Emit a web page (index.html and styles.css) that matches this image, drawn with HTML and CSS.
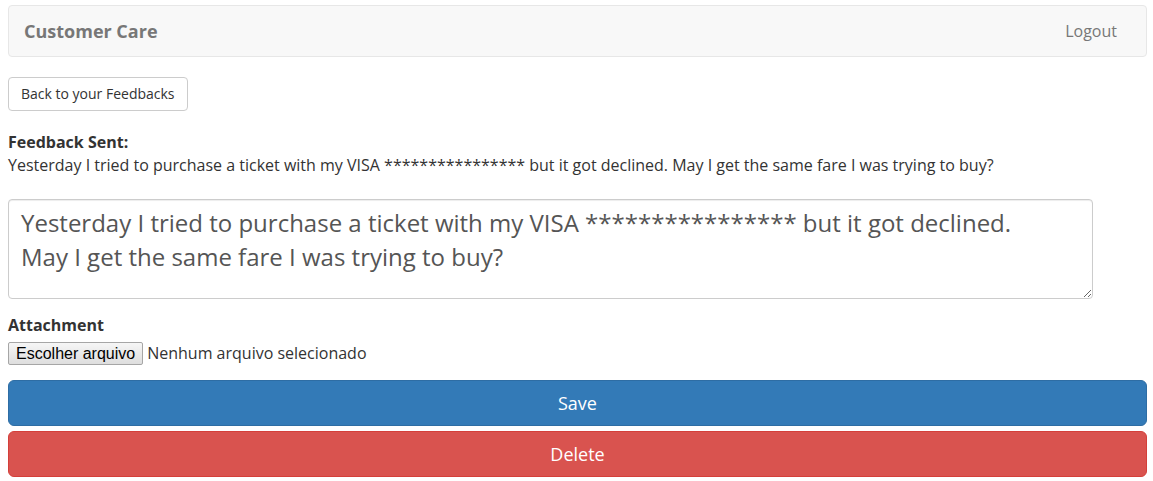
FILE: index.html
```html
<!DOCTYPE html>
<html lang="en">
<head>
<meta charset="utf-8">
<title>Customer Care</title>
<link rel="stylesheet" href="styles.css">
</head>
<body>
<div class="page">
  <nav class="navbar">
    <a class="brand" href="#">Customer Care</a>
    <a class="nav-link" href="#">Logout</a>
  </nav>
  <main class="content">
    <div class="back-row"><a class="btn btn-default" href="#">Back to your Feedbacks</a></div>
    <div class="sent">
      <strong class="sent-title">Feedback Sent:</strong>
      <p class="sent-text">Yesterday I tried to purchase a ticket with my VISA **************** but it got declined. May I get the same fare I was trying to buy?</p>
    </div>
    <textarea class="feedback">Yesterday I tried to purchase a ticket with my VISA **************** but it got declined.
May I get the same fare I was trying to buy?</textarea>
    <label class="field-label">Attachment</label>
    <div class="file-input">
      <span class="file-btn">Escolher arquivo</span>
      <span class="file-name">Nenhum arquivo selecionado</span>
    </div>
    <div class="actions">
      <button class="btn-lg btn-primary" type="button">Save</button>
      <button class="btn-lg btn-danger" type="button">Delete</button>
    </div>
  </main>
</div>
</body>
</html>
```
FILE: styles.css
```css
* { box-sizing: border-box; }
html, body { margin: 0; padding: 0; background: #fff; }
body {
  font-family: "Open Sans", "Helvetica Neue", Arial, sans-serif;
  font-size: 16px;
  line-height: 1.42857143;
  color: #333;
}
.page { padding: 5px 6px 0 8px; }
.navbar {
  display: flex;
  justify-content: space-between;
  align-items: center;
  height: 52px;
  background: #f8f8f8;
  border: 1px solid #e7e7e7;
  border-radius: 4px;
  margin-bottom: 20px;
}
.brand {
  padding: 15px;
  font-size: 18px;
  line-height: 20px;
  font-weight: 700;
  color: #777;
  text-decoration: none;
}
.nav-link {
  padding: 15px;
  margin-right: 14px;
  font-size: 16px;
  line-height: 20px;
  color: #777;
  text-decoration: none;
}
.content { display: flex; flex-direction: column; align-items: flex-start; }
.back-row { margin-bottom: 20px; }
.btn {
  display: inline-block;
  padding: 6px 12px;
  font-size: 14px;
  line-height: 20px;
  border: 1px solid #ccc;
  border-radius: 4px;
  background: #fff;
  color: #333;
  text-decoration: none;
}
.sent { margin-bottom: 22px; }
.sent-title { display: block; font-weight: 700; }
.sent-text { margin: 0; }
.feedback {
  display: block;
  width: 1085px;
  height: 100px;
  padding: 6px 12px;
  border: 1px solid #ccc;
  border-radius: 4px;
  box-shadow: inset 0 1px 1px rgba(0,0,0,.075);
  font-family: "Open Sans", "Helvetica Neue", Arial, sans-serif;
  font-size: 24px;
  line-height: 1.42857143;
  color: #555;
  margin: 0 0 15px;
  resize: vertical;
}
.field-label { display: block; font-weight: 700; margin-bottom: 5px; }
.file-input { display: flex; align-items: center; margin-bottom: 15px; }
.file-btn {
  font-family: Arial, "Liberation Sans", sans-serif;
  font-size: 16px;
  line-height: 19px;
  padding: 1px 7px;
  border: 1px solid #a6a6a6;
  border-radius: 2px;
  background: linear-gradient(#f6f6f6, #dedede);
  color: #000;
  margin-right: 4px;
}
.file-name { font-size: 16px; color: #333; }
.actions { display: flex; flex-direction: column; gap: 5px; width: 100%; }
.btn-lg {
  display: block;
  width: 100%;
  padding: 10px 16px;
  font-family: "Open Sans", "Helvetica Neue", Arial, sans-serif;
  font-size: 18px;
  line-height: 1.3333333;
  border-radius: 6px;
  border: 1px solid transparent;
  color: #fff;
  cursor: pointer;
}
.btn-primary { background: #337ab7; border-color: #2e6da4; }
.btn-danger { background: #d9534f; border-color: #d43f3a; }
```
